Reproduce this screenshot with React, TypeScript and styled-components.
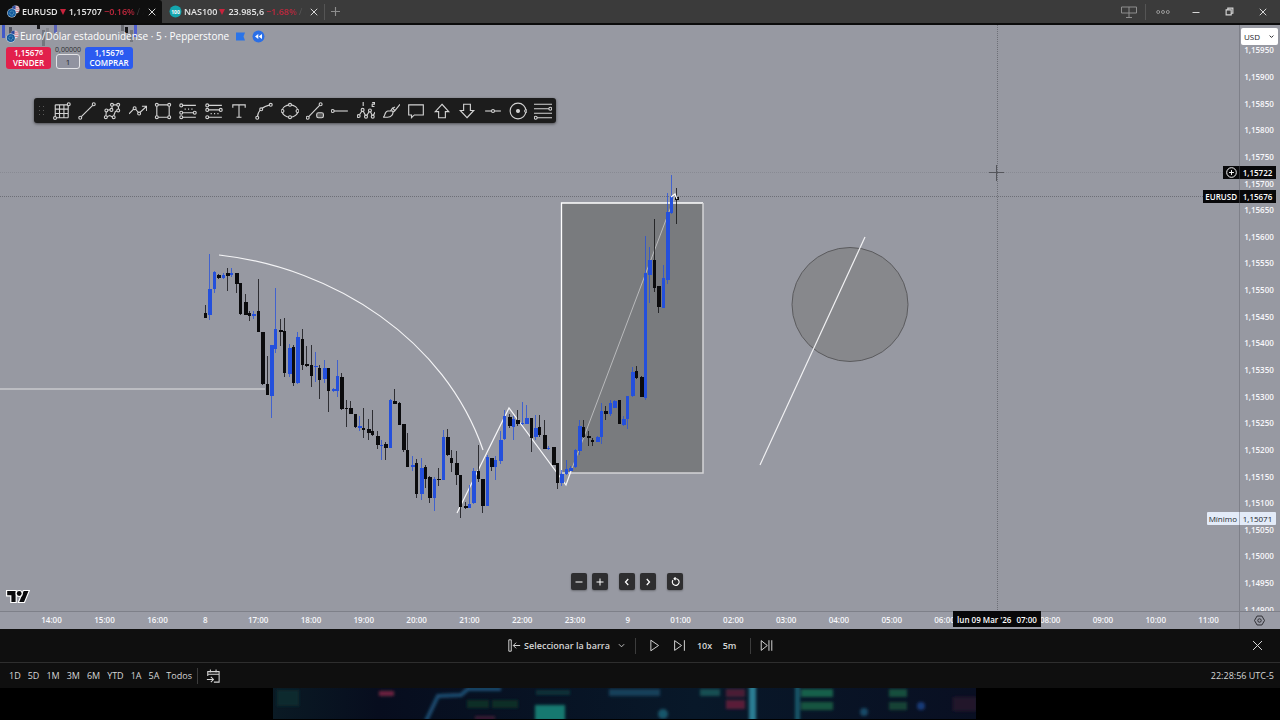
import React from 'react';
import styled, { createGlobalStyle } from 'styled-components';

const FONT = '"Open Sans", "Noto Sans", "Liberation Sans", sans-serif';
const BLUE = '#2450dc';
const BLACK = '#0b0b0d';

const GlobalStyle = createGlobalStyle`
  *, *::before, *::after { box-sizing: border-box; }
  body { margin: 0; background: #000; font-family: ${FONT}; }
  button, input, select { font-family: inherit; margin: 0; }
`;

/* ---------- page ---------- */

const Page = styled.div`
  display: flex;
  flex-direction: column;
  height: 100vh;
  min-height: 480px;
  background: #000;
  color: #fff;
  overflow: hidden;
`;

const IconButton = styled.button<{ $w?: number; $color?: string }>`
  display: flex;
  align-items: center;
  justify-content: center;
  width: ${(p) => p.$w ?? 16}px;
  height: 16px;
  padding: 0;
  border: 0;
  background: none;
  color: ${(p) => p.$color ?? '#d6d6d6'};
  flex: none;
`;

const Divider = styled.span<{ $color?: string }>`
  width: 1px;
  height: 16px;
  background: ${(p) => p.$color ?? '#3c3c3c'};
  flex: none;
`;

/* ---------- tab bar ---------- */

const TabBar = styled.header`
  display: flex;
  align-items: center;
  flex: none;
  height: 25px;
  background: #3b3b3b;
  border-bottom: 2px solid #0b0b0b;
`;

const Tab = styled.div<{ $active?: boolean }>`
  display: flex;
  align-items: center;
  width: 162px;
  height: 100%;
  padding: 0 2px 0 7px;
  background: ${(p) => (p.$active ? '#0f0f0f' : 'transparent')};
  border-radius: 0 3px 0 0;
`;

const TabText = styled.div`
  display: flex;
  align-items: center;
  flex: 1;
  min-width: 0;
  margin-left: 2px;
  overflow: hidden;
  white-space: nowrap;
  font-size: 9px;
  line-height: 12px;
  font-weight: 600;
  color: #e6e6e6;
  mask-image: linear-gradient(90deg, #000 88%, transparent 100%);
`;

const Change = styled.span`
  margin-left: 2px;
  color: #c3283e;
`;

const Faded = styled.span`
  margin-left: 2px;
  font-weight: 400;
  color: #8a8a8a;
`;

const Triangle = styled.span`
  width: 0;
  height: 0;
  margin: 0 3px 0 2px;
  border: 3px solid transparent;
  border-top: 6px solid #c8233c;
  border-bottom: 0;
`;

const WindowTools = styled.div`
  display: flex;
  align-items: center;
  margin-left: auto;
`;

/* ---------- chart ---------- */

const ChartRow = styled.main`
  position: relative;
  display: flex;
  flex: 1;
  min-height: 0;
  background: #9799a2;
`;

const Plot = styled.div`
  position: relative;
  flex: 1;
  min-width: 0;
  overflow: hidden;
`;

const PlotSvg = styled.svg`
  display: block;
  width: 100%;
  height: 100%;
`;

const Legend = styled.div`
  position: absolute;
  top: 4px;
  left: 6px;
`;

const TitleRow = styled.div`
  display: flex;
  align-items: center;
  height: 15px;
  gap: 1px;
`;

const Title = styled.h1`
  margin: 0;
  font-size: 10px;
  line-height: 15px;
  font-weight: 500;
  color: #fff;
  white-space: nowrap;
`;

const TitleBadges = styled.div`
  display: flex;
  align-items: center;
  gap: 7px;
  margin-left: 6px;
`;

const TradeRow = styled.div`
  display: flex;
  align-items: flex-end;
  gap: 5px;
  height: 24px;
  margin-top: 1px;
`;

const TradeButton = styled.button<{ $bg: string; $w: number }>`
  display: flex;
  flex-direction: column;
  align-items: center;
  justify-content: center;
  width: ${(p) => p.$w}px;
  height: 22px;
  padding: 0;
  border: 0;
  border-radius: 3px;
  background: ${(p) => p.$bg};
  color: #fff;
  font-size: 8px;
  line-height: 10px;
  font-weight: 600;
`;

const Pip = styled.sup`
  font-size: 7px;
  line-height: 7px;
  vertical-align: 1px;
`;

const Quantity = styled.label`
  display: flex;
  flex-direction: column;
  align-items: center;
  width: 24px;
  font-size: 7px;
  line-height: 8px;
  color: #2c2c30;
`;

const QuantityInput = styled.input`
  width: 24px;
  height: 15px;
  padding: 0;
  border: 1px solid #e4e4e8;
  border-radius: 3px;
  background: #9193a0;
  color: #26262a;
  font-size: 8px;
  text-align: center;
`;

const DrawToolbar = styled.div`
  position: absolute;
  top: 73px;
  left: 34px;
  display: flex;
  align-items: center;
  width: 522px;
  height: 25px;
  border-radius: 3px;
  background: #1c1c1c;
  box-shadow: 0 1px 3px rgba(0, 0, 0, 0.5);
`;

const Grip = styled.span`
  display: flex;
  justify-content: center;
  width: 15px;
`;

const ToolButton = styled.button`
  display: flex;
  align-items: center;
  justify-content: center;
  flex: 1;
  min-width: 0;
  height: 100%;
  padding: 0;
  border: 0;
  background: none;
  color: #d2d2d2;
`;

const NavButtons = styled.div`
  position: absolute;
  bottom: 21px;
  left: 571px;
  display: flex;
  gap: 11px;
`;

const NavGroup = styled.div`
  display: flex;
  gap: 5px;
`;

const NavButton = styled.button`
  display: flex;
  align-items: center;
  justify-content: center;
  width: 16px;
  height: 17px;
  padding: 0;
  border: 0;
  border-radius: 2px;
  background: #2e2e30;
  color: #fff;
  box-shadow: 0 1px 2px rgba(0, 0, 0, 0.3);
`;

const Brand = styled.a`
  position: absolute;
  left: 6px;
  bottom: 7px;
  display: flex;
`;

const PriceAxis = styled.aside`
  position: relative;
  display: flex;
  flex-direction: column;
  flex: none;
  width: 41px;
  border-left: 1px solid #7e8089;
  overflow: hidden;
`;

const PriceList = styled.ol`
  display: flex;
  flex-direction: column;
  flex: 1;
  margin: 12px 0 -12px;
  padding: 0 2px 0 0;
  list-style: none;
`;

const Price = styled.li`
  display: flex;
  align-items: center;
  justify-content: center;
  flex: 1;
  font-size: 8px;
  line-height: 10px;
  font-weight: 600;
  color: #f7f7fa;
`;

const CurrencyBox = styled.label`
  position: absolute;
  top: 3px;
  left: 1px;
  right: 2px;
  display: flex;
  align-items: center;
  height: 17px;
  padding: 0 4px 0 3px;
  border-radius: 2px;
  background: #fff;
  color: #1b1b1f;
`;

const Currency = styled.select`
  flex: 1;
  min-width: 0;
  padding: 0;
  border: 0;
  background: none;
  color: inherit;
  font-size: 8px;
  line-height: 12px;
  appearance: none;
`;

const AxisTag = styled.div<{ $top: number; $light?: boolean }>`
  position: absolute;
  top: ${(p) => p.$top}px;
  right: 4px;
  display: flex;
  align-items: center;
  height: 13px;
  border-radius: ${(p) => (p.$light ? 1 : 0)}px;
  background: ${(p) => (p.$light ? '#e3ebf8' : '#08080a')};
  color: ${(p) => (p.$light ? '#22252e' : '#fff')};
  font-size: 8px;
  line-height: 13px;
  font-weight: ${(p) => (p.$light ? 500 : 600)};
  white-space: nowrap;
`;

const TagName = styled.span`
  padding: 0 2px;
`;

const TagValue = styled.span<{ $light?: boolean }>`
  width: 37px;
  padding-right: 1px;
  text-align: center;
  border-left: 1px solid ${(p) => (p.$light ? '#a9aebb' : '#2c2c30')};
`;

/* ---------- time axis ---------- */

const TimeRow = styled.div`
  position: relative;
  display: flex;
  flex: none;
  height: 18px;
  border-top: 1px solid #7e8089;
  background: #9a9ca6;
  font-size: 8px;
  line-height: 16px;
  font-weight: 600;
  color: #f7f7fa;
`;

const TimeTrack = styled.div`
  display: flex;
  flex: 1;
  min-width: 0;
  padding: 0 4px 0 25px;
`;

const PreviousDay = styled.div`
  display: flex;
  width: 159px;
  margin-right: -5px;
`;

const CurrentDays = styled.div`
  display: flex;
  flex: 1;
`;

const TimeCell = styled.span`
  flex: 1;
  min-width: 0;
  text-align: center;
`;

const AxisCorner = styled.div`
  display: flex;
  align-items: center;
  justify-content: center;
  width: 41px;
  padding-right: 2px;
  border-left: 1px solid #7e8089;
`;

const TimeTag = styled.div`
  position: absolute;
  top: -1px;
  left: 953px;
  display: flex;
  justify-content: center;
  gap: 5px;
  width: 88px;
  height: 16px;
  background: #08080a;
  color: #fff;
  font-size: 8px;
  line-height: 18px;
  white-space: nowrap;
`;

/* ---------- bottom bars ---------- */

const ReplayBar = styled.section`
  display: grid;
  grid-template-columns: 1fr auto 1fr;
  align-items: center;
  flex: none;
  height: 34px;
  padding: 0 15px;
  background: #0f0f0f;
  border-bottom: 1px solid #2e2e2e;
  color: #d6d6d6;
`;

const ReplayTools = styled.div`
  grid-column: 2;
  display: flex;
  align-items: center;
  padding-left: 2px;
`;

const ReplayClose = styled.div`
  display: flex;
  justify-content: flex-end;
`;

const TextButton = styled.button<{ $w?: number }>`
  width: ${(p) => (p.$w ? `${p.$w}px` : 'auto')};
  height: 16px;
  padding: 0;
  border: 0;
  background: none;
  color: #d6d6d6;
  font-size: 9px;
  line-height: 16px;
  font-weight: 600;
  white-space: nowrap;
`;

const RangeBar = styled.footer`
  display: flex;
  align-items: center;
  flex: none;
  height: 25px;
  padding: 0 6px 0 9px;
  background: #0f0f0f;
`;

const Ranges = styled.nav`
  display: flex;
  gap: 7px;
  margin-right: 5px;
`;

const Range = styled.button`
  height: 16px;
  padding: 0;
  border: 0;
  background: none;
  color: #d6d6d6;
  font-size: 9px;
  line-height: 16px;
  font-weight: 500;
`;

const Clock = styled.button`
  height: 16px;
  margin-left: auto;
  padding: 0;
  border: 0;
  background: none;
  color: #d6d6d6;
  font-size: 9px;
  line-height: 16px;
  font-weight: 500;
`;

const Backdrop = styled.div`
  display: flex;
  justify-content: center;
  flex: none;
  height: 32px;
  padding-right: 31px;
  background: #000;
`;

const BackdropSvg = styled.svg`
  width: 703px;
  max-width: 100%;
  height: 31px;
`;

/* ---------- data ---------- */

type Candle = [up: 0 | 1, high: number, top: number, bottom: number, low: number];

const candles: Candle[] = [
  [0, 305, 313, 318, 318], [1, 254, 289, 315, 320], [1, 271, 272, 289, 293], [0, 274, 275, 278, 279],
  [1, 273, 275, 278, 279], [0, 268, 273, 276, 291], [1, 268, 273, 275, 277], [0, 273, 273, 284, 293],
  [0, 283, 283, 314, 315], [0, 294, 302, 315, 315], [0, 311, 313, 316, 321], [1, 311, 314, 316, 319],
  [0, 279, 311, 332, 332], [0, 332, 332, 384, 385], [0, 356, 384, 395, 395], [1, 345, 345, 396, 418],
  [1, 288, 329, 349, 353], [0, 319, 330, 332, 346], [0, 318, 331, 373, 377], [1, 344, 348, 374, 377],
  [0, 345, 347, 383, 386], [1, 332, 337, 383, 384], [0, 329, 339, 365, 370], [0, 346, 364, 366, 367],
  [0, 345, 365, 376, 387], [1, 352, 366, 367, 382], [0, 365, 368, 380, 399], [1, 360, 368, 379, 383],
  [0, 368, 368, 391, 412], [1, 388, 389, 391, 392], [1, 360, 376, 391, 397], [0, 373, 377, 409, 410],
  [0, 400, 408, 409, 427], [0, 401, 408, 414, 414], [0, 414, 414, 427, 428], [1, 416, 426, 428, 431],
  [0, 408, 428, 430, 438], [0, 419, 429, 433, 440], [0, 410, 431, 435, 436],
  [0, 431, 436, 445, 449], [1, 440, 445, 446, 460], [0, 442, 444, 448, 460], [1, 399, 400, 448, 448],
  [0, 389, 401, 404, 404], [0, 402, 403, 425, 425], [0, 424, 424, 450, 452], [0, 433, 450, 467, 467],
  [1, 456, 465, 467, 471], [0, 459, 463, 494, 498], [1, 458, 468, 494, 500], [0, 465, 467, 479, 488],
  [0, 476, 477, 498, 503], [1, 477, 479, 498, 511], [0, 468, 479, 480, 486], [1, 430, 437, 480, 480],
  [0, 429, 437, 455, 456], [0, 450, 458, 463, 472], [0, 451, 463, 475, 485], [0, 475, 475, 507, 518],
  [0, 502, 506, 508, 509], [1, 485, 504, 508, 508], [1, 468, 471, 503, 504], [0, 445, 471, 479, 482],
  [0, 479, 479, 506, 513], [1, 455, 457, 506, 506], [0, 458, 458, 467, 471], [1, 456, 460, 467, 480],
  [1, 431, 440, 461, 464], [1, 410, 416, 439, 440], [0, 414, 417, 426, 428], [1, 416, 419, 427, 440],
  [0, 410, 420, 424, 426], [1, 402, 423, 424, 425], [1, 405, 418, 424, 424], [0, 418, 418, 438, 452],
  [1, 415, 428, 437, 440], [0, 415, 427, 435, 437], [0, 420, 435, 449, 449], [1, 446, 448, 449, 450],
  [0, 447, 447, 465, 465], [0, 463, 463, 483, 489], [1, 470, 474, 483, 486], [1, 460, 469, 474, 475],
  [1, 466, 468, 471, 471], [1, 449, 450, 467, 468], [1, 420, 426, 451, 455], [0, 420, 427, 437, 438],
  [0, 431, 436, 438, 446], [0, 438, 440, 442, 446], [1, 436, 437, 442, 442], [1, 403, 411, 437, 444],
  [0, 406, 411, 414, 420], [1, 400, 403, 414, 416], [1, 400, 401, 408, 408], [0, 400, 400, 424, 424],
  [1, 416, 419, 425, 426], [1, 396, 396, 419, 429], [1, 367, 372, 396, 397], [0, 366, 371, 378, 379],
  [0, 376, 377, 397, 397], [1, 236, 273, 398, 400], [1, 247, 260, 275, 303], [0, 219, 260, 288, 292],
  [0, 286, 286, 307, 313], [1, 265, 278, 308, 308], [1, 193, 212, 280, 284], [1, 175, 196, 213, 214],
  [0, 188, 197, 200, 224],
];

const prices = Array.from({ length: 22 }, (_, i) => `1,${15950 - i * 50}`);
const previousTimes = ['14:00', '15:00', '16:00'];
/* The hour under the crosshair has no label of its own; the time tag shows it. */
const times = [
  '8', '17:00', '18:00', '19:00', '20:00', '21:00', '22:00', '23:00', '9', '01:00',
  '02:00', '03:00', '04:00', '05:00', '06:00', '', '08:00', '09:00', '10:00', '11:00',
];
const ranges = ['1D', '5D', '1M', '3M', '6M', 'YTD', '1A', '5A', 'Todos'];

/* ---------- icons ---------- */

const Glyph = ({ size = 16, children, sw = 1 }: { size?: number; sw?: number; children: React.ReactNode }) => (
  <svg width={size} height={size} viewBox="0 0 16 16" fill="none" stroke="currentColor" strokeWidth={sw} aria-hidden="true">
    {children}
  </svg>
);

const Dot = ({ x, y, r = 1.3 }: { x: number; y: number; r?: number }) => <circle cx={x} cy={y} r={r} fill="#1c1c1c" />;

const CloseIcon = ({ size = 8 }: { size?: number }) => (
  <Glyph size={size} sw={16 / size}><path d="M1.5 1.5l13 13M14.5 1.5l-13 13" /></Glyph>
);

const PairIcon = () => (
  <svg width="13" height="13" viewBox="0 0 13 13" aria-hidden="true">
    <circle cx="8.6" cy="4.4" r="3.9" fill="#e8e3ea" />
    <path d="M8.6 .5a3.9 3.9 0 0 0-3.9 3.9h3.9z" fill="#2c4a9c" />
    <path d="M8.6 2.2h3.2M8.6 4.2h3.9M6 6.4h6" stroke="#c65a68" strokeWidth=".8" />
    <circle cx="4.8" cy="8" r="4.6" fill="#dfe7f0" />
    <circle cx="4.8" cy="8" r="4.1" fill="#155a9d" />
    <circle cx="4.8" cy="8" r="2" fill="none" stroke="#6fb0c8" strokeWidth=".9" strokeDasharray="1 .6" />
  </svg>
);

const IndexIcon = () => (
  <svg width="13" height="13" viewBox="0 0 13 13" aria-hidden="true">
    <circle cx="6.5" cy="6.5" r="6" fill="#14a5ad" />
    <text x="6.5" y="8.5" fontSize="5" fontWeight="700" fill="#fff" textAnchor="middle">100</text>
  </svg>
);

const tools: { name: string; icon: React.ReactNode }[] = [
  { name: 'Cuadrícula', icon: <><path d="M2 2.5h11.5v11.5M2 2.5v11.5h11.5M2 6.3h11.5M2 10.2h11.5M5.8 2.5v11.5M9.7 2.5v11.5" /><Dot x={14} y={2} /><Dot x={1.8} y={14.2} /></> },
  { name: 'Línea de tendencia', icon: <><path d="M2.5 13.5l11-11" /><Dot x={2} y={14} /><Dot x={14} y={2} /></> },
  { name: 'Trazado', icon: <><path d="M2.5 13.5L3 7.5l5-1 0-4 5.5 0 .5 5-3 1-2 5-3-1.500z" /><Dot x={2.5} y={13.5} /><Dot x={3} y={7.5} /><Dot x={8} y={2.5} /><Dot x={13.500} y={2.500} /><Dot x={13.500} y={7.5} /><Dot x={7.500} y={7} /><Dot x={9.500} y={13.500} /></> },
  { name: 'Polilínea', icon: <><path d="M0 10.500L5 5.500l4 4.500 6.500-6M11.500 3.800h4.200V8" /><Dot x={5} y={5.500} /><Dot x={9} y={10.300} /></> },
  { name: 'Rectángulo', icon: <><path d="M2.500 2.500h11v11h-11z" /><Dot x={2.500} y={2.500} /><Dot x={13.500} y={2.500} /><Dot x={2.500} y={13.500} /><Dot x={13.500} y={13.500} /></> },
  { name: 'Posición larga', icon: <><path d="M1 3h14M1 9.500h14M1 13.500h14" /><path d="M5 6.300h8" strokeDasharray="1 2" /><Dot x={2} y={3} /><Dot x={14} y={9.500} /><Dot x={2} y={9.500} /><Dot x={2} y={13.500} /></> },
  { name: 'Posición corta', icon: <><path d="M1 3h14M1 7h14M1 13.500h14" /><path d="M5 10.300h8" strokeDasharray="1 2" /><Dot x={2} y={3} /><Dot x={2} y={7} /><Dot x={14} y={7} /><Dot x={2} y={13.500} /></> },
  { name: 'Texto', icon: <path d="M2.500 5V2.500h11V5M8 2.500v11M5.800 13.500h4.400" /> },
  { name: 'Curva', icon: <><path d="M2 14C2.500 8 6 4 14 2.500" /><Dot x={2} y={14} /><Dot x={5.500} y={6.500} /><Dot x={14} y={2.500} /></> },
  { name: 'Elipse', icon: <><ellipse cx="8" cy="8" rx="7" ry="5.500" /><Dot x={1.300} y={8} /><Dot x={14.700} y={8} /><Dot x={8} y={2.500} /><Dot x={8} y={13.500} /></> },
  { name: 'Línea con información', icon: <><path d="M2 13.500l10.500-11" /><Dot x={1.500} y={14} /><Dot x={13} y={2} /><rect x="9.500" y="9.500" width="6" height="4.500" rx="1.500" fill="#555" /></> },
  { name: 'Rayo horizontal', icon: <><path d="M2 8h13" /><Dot x={1.500} y={8} /></> },
  { name: 'Ondas de Elliott', icon: <><path d="M1.500 12.500L5 7l3 6 3.500-5.500L14 13l2-4" /><path d="M5.500 0v3.500M13.500 .500h2v1.500h-2v2h2" /><Dot x={1.500} y={12.500} /><Dot x={5} y={7} /><Dot x={8} y={13} /><Dot x={11.500} y={7.500} /><Dot x={14} y={13} /></> },
  { name: 'Pincel', icon: <><path d="M1 13.500c2-.500 1-5 4-5.500h4.500c1 3-1.500 5.500-4.500 5.500zM7.500 8l1.800-2.500 2.200 2.200L16 2M9.500 9.500l2-1.800M9.500 5.500l2-1" /></> },
  { name: 'Comentario', icon: <path d="M1.500 2.500h13v9H6.500L4 14v-2.500H1.500z" /> },
  { name: 'Flecha arriba', icon: <path d="M8 2l6 6.500h-3V14H5V8.500H2z" /> },
  { name: 'Flecha abajo', icon: <path d="M8 14l6-6.500h-3V2H5v5.500H2z" /> },
  { name: 'Línea horizontal', icon: <><path d="M1 8h14" /><Dot x={8} y={8} /></> },
  { name: 'Círculo', icon: <><circle cx="8" cy="8" r="7" /><circle cx="8" cy="8" r="1.300" fill="currentColor" /><Dot x={15} y={8} r={1.100} /></> },
  { name: 'Retroceso de Fibonacci', icon: <><path d="M0 2h16M0 6h16M0 10h16M0 14h16" /><Dot x={14.500} y={6} /><Dot x={1.500} y={14} /></> },
];

/* ---------- chart drawing ---------- */

const GHOSTS: [number, number, number, string][] = [
  [3, 25, 38, '#4159c9'], [10, 27, 36, '#4f5362'], [38, 25, 29, '#17171b'], [43, 30, 46, '#74767e'],
  [47, 28, 38, '#85878f'], [55, 25, 33, '#5a63b8'], [122, 25, 31, '#6a6c74'], [126, 27, 33, '#17171b'],
  [131, 30, 42, '#74767e'], [135, 25, 37, '#4f5fd0'],
];

const ChartDrawing = () => (
  <PlotSvg role="img" aria-label="Gráfico de velas EURUSD 5 minutos">
    <g transform="translate(0 -25)">
      {GHOSTS.map(([x, y1, y2, c]) => <rect key={x} x={x - 1} y={y1} width="3" height={y2 - y1} fill={c} />)}
      <line x1="0" x2="100%" y1="172.500" y2="172.500" stroke="#888a93" strokeDasharray="1 1" />
      <line x1="0" x2="100%" y1="196.500" y2="196.500" stroke="#6d6f77" strokeDasharray="1 1" />
      <line x1="997.500" x2="997.500" y1="25" y2="2000" stroke="#6d6f77" strokeDasharray="1 1" />
      <line x1="0" x2="265" y1="389" y2="389" stroke="#c9cacd" strokeWidth="1.500" />
      <path d="M219 255C335 268 445 340 483 450" fill="none" stroke="#f4f4f6" strokeWidth="1.200" />
      <ellipse cx="850" cy="304.500" rx="58" ry="57" fill="#87888c" stroke="#5b5b5e" />
      <path d="M865 237L760 465" stroke="#f2f2f4" strokeWidth="1.200" />
      <rect x="561.500" y="203" width="141.500" height="270" fill="#797b7e" />
      <path d="M561.500 473V203H703" fill="none" stroke="#fff" strokeWidth="1.300" />
      <path d="M561.500 473H703V203" fill="none" stroke="#d4d4d6" strokeWidth="1.500" />
      <path d="M457 513L509 408L566 485L571 471" fill="none" stroke="#f7f7f9" strokeWidth="1.200" />
      <path d="M571 471L675 196" fill="none" stroke="#b9babc" />
      <g shapeRendering="crispEdges">
        {candles.map(([up, high, top, bottom, low], i) => {
          const x = Math.round(204.900 + i * 4.400);
          const fill = up ? BLUE : BLACK;
          return (
            <g key={i} fill={fill}>
              <rect x={x} y={high} width="1" height={Math.max(1, low - high)} opacity=".75" />
              <rect x={x - 1} y={top} width={i % 2 ? 4 : 3} height={Math.max(1, bottom - top)} />
            </g>
          );
        })}
      </g>
      <path d="M671 197l4-3 2 5" fill="none" stroke="#fff" strokeWidth="1.200" />
      <path d="M989 172.500h15M996.500 165v16" stroke="#55565c" />
    </g>
  </PlotSvg>
);

const TradeSide = ({ bg, w, label }: { bg: string; w: number; label: string }) => (
  <TradeButton $bg={bg} $w={w}>
    <span>1,1567<Pip>6</Pip></span>
    <span>{label}</span>
  </TradeButton>
);

const Instrument = ({ active, icon, symbol, last, change }: { active?: boolean; icon: React.ReactNode; symbol: string; last: string; change: string }) => (
  <Tab $active={active}>
    {icon}
    <TabText>
      {symbol}
      <Triangle />
      {last}
      <Change>{change}</Change>
      <Faded>/ /</Faded>
    </TabText>
    <IconButton aria-label={`Cerrar ${symbol}`}><CloseIcon /></IconButton>
  </Tab>
);

export default function App() {
  return (
    <Page>
      <GlobalStyle />
      <TabBar>
        <Instrument active icon={<PairIcon />} symbol="EURUSD" last="1,15707" change="−0.16%" />
        <Instrument icon={<IndexIcon />} symbol="NAS100" last="23.985,6" change="−1.68%" />
        <Divider $color="#555" />
        <IconButton $w={20} $color="#8e8e8e" aria-label="Nueva pestaña"><Glyph size={9} sw={2}><path d="M8 0v16M0 8h16" /></Glyph></IconButton>
        <WindowTools>
          <IconButton $w={33} $color="#8e8e8e" aria-label="Diseño"><Glyph><path d="M.5 3h15v6H.5zM8 3v11M5 13.500h6" /></Glyph></IconButton>
          <Divider $color="#555" />
          <IconButton $w={33} $color="#9a9a9a" aria-label="Más"><Glyph size={14} sw={1.100}><circle cx="2.500" cy="8" r="1.700" /><circle cx="8" cy="8" r="1.700" /><circle cx="13.500" cy="8" r="1.700" /></Glyph></IconButton>
          <IconButton $w={34} aria-label="Minimizar"><Glyph size={8} sw={2}><path d="M1 9h14" /></Glyph></IconButton>
          <IconButton $w={33} aria-label="Restaurar"><Glyph size={9} sw={2}><path d="M2 5h9v9H2zM5 5V2h9v9h-3" /></Glyph></IconButton>
          <IconButton $w={34} aria-label="Cerrar"><CloseIcon /></IconButton>
        </WindowTools>
      </TabBar>

      <ChartRow>
        <Plot>
          <ChartDrawing />
          <Legend>
            <TitleRow>
              <PairIcon />
              <Title>Euro/Dólar estadounidense · 5 · Pepperstone</Title>
              <TitleBadges>
                <svg width="9" height="9" viewBox="0 0 9 9" aria-hidden="true"><path d="M0 .500h9L7.500 4.500 9 8.500H0z" fill="#2b74e8" /></svg>
                <svg width="13" height="13" viewBox="0 0 13 13" aria-hidden="true"><circle cx="6.500" cy="6.500" r="6" fill="#2b6fe6" /><path d="M6.300 4v5L3 6.500zM10 4v5L6.700 6.500z" fill="#fff" /></svg>
              </TitleBadges>
            </TitleRow>
            <TradeRow>
              <TradeSide bg="#e2204c" w={45} label="VENDER" />
              <Quantity>
                0,00000
                <QuantityInput aria-label="Cantidad" defaultValue="1" />
              </Quantity>
              <TradeSide bg="#2b5bf0" w={48} label="COMPRAR" />
            </TradeRow>
          </Legend>

          <DrawToolbar role="toolbar" aria-label="Herramientas de dibujo">
            <Grip>
              <svg width="6" height="9" viewBox="0 0 6 9" fill="#5a5a5a" aria-hidden="true">
                {[0, 4, 8].map((y) => <path key={y} d={`M0 ${y}h1v1H0zM4 ${y}h1v1H4z`} />)}
              </svg>
            </Grip>
            {tools.map((t) => <ToolButton key={t.name} aria-label={t.name}><Glyph size={18}>{t.icon}</Glyph></ToolButton>)}
          </DrawToolbar>

          <Brand href="#" aria-label="TradingView">
            <svg width="24" height="15" viewBox="-2 1 40 24" fill="#0b0b0d" stroke="#fff" strokeWidth="4" paintOrder="stroke" aria-hidden="true">
              <path d="M14 22H7V11H0V4h14v18zM28 22h-8l7.500-18h8L28 22z" /><circle cx="20" cy="8" r="4" />
            </svg>
          </Brand>

          <NavButtons>
            <NavGroup>
              <NavButton aria-label="Alejar"><Glyph size={8} sw={2}><path d="M1 8h14" /></Glyph></NavButton>
              <NavButton aria-label="Acercar"><Glyph size={8} sw={2}><path d="M1 8h14M8 1v14" /></Glyph></NavButton>
            </NavGroup>
            <NavGroup>
              <NavButton aria-label="Atrás"><Glyph size={8} sw={2.500}><path d="M10.500 2L5 8l5.500 6" /></Glyph></NavButton>
              <NavButton aria-label="Adelante"><Glyph size={8} sw={2.500}><path d="M5.500 2L11 8l-5.500 6" /></Glyph></NavButton>
            </NavGroup>
            <NavButton aria-label="Restablecer"><Glyph size={9} sw={2}><path d="M3.500 5.500a6 6 0 1 0 5.500-2.500H5M8 .500L5.500 3 8 5.500" /></Glyph></NavButton>
          </NavButtons>
        </Plot>

        <PriceAxis>
          <PriceList>
            {prices.map((p) => <Price key={p}>{p}</Price>)}
          </PriceList>
          <CurrencyBox>
            <Currency aria-label="Moneda"><option>USD</option></Currency>
            <Glyph size={5} sw={3}><path d="M2 5l6 6 6-6" /></Glyph>
          </CurrencyBox>
        </PriceAxis>

        <AxisTag $top={141}>
          <IconButton $color="#fff" aria-label="Añadir alerta"><Glyph size={11} sw={1.400}><circle cx="8" cy="8" r="7" /><path d="M8 4.500v7M4.500 8h7" /></Glyph></IconButton>
          <TagValue>1,15722</TagValue>
        </AxisTag>
        <AxisTag $top={165}><TagName>EURUSD</TagName><TagValue>1,15676</TagValue></AxisTag>
        <AxisTag $top={487} $light><TagName>Mínimo</TagName><TagValue $light>1,15071</TagValue></AxisTag>
      </ChartRow>

      <TimeRow>
        <TimeTrack>
          <PreviousDay>{previousTimes.map((t) => <TimeCell key={t}>{t}</TimeCell>)}</PreviousDay>
          <CurrentDays>{times.map((t) => <TimeCell key={t}>{t}</TimeCell>)}</CurrentDays>
        </TimeTrack>
        <AxisCorner>
          <IconButton $color="#2b2b30" aria-label="Ajustes"><Glyph size={11} sw={1.400}><path d="M4.500 1.500h7L15.300 8l-3.800 6.500h-7L.7 8z" /><circle cx="8" cy="8" r="2.500" /></Glyph></IconButton>
        </AxisCorner>
        <TimeTag><span>lun 09 Mar '26</span><span>07:00</span></TimeTag>
      </TimeRow>

      <ReplayBar>
        <ReplayTools>
          <IconButton $w={13} aria-label="Ir a la barra"><Glyph size={13} sw={1.200}><path d="M1 1h3v14H1zM15 8H6.500M10 4.500L6.500 8l3.500 3.500" /></Glyph></IconButton>
          <TextButton $w={92}>Seleccionar la barra</TextButton>
          <IconButton aria-label="Opciones"><Glyph size={7} sw={2}><path d="M2 5l6 6 6-6" /></Glyph></IconButton>
          <IconButton $w={13} as="span"><Divider /></IconButton>
          <IconButton $w={25} aria-label="Reproducir"><Glyph size={13} sw={1.200}><path d="M3.500 1.500L13 8l-9.500 6.500z" /></Glyph></IconButton>
          <IconButton $w={25} aria-label="Avanzar"><Glyph size={13} sw={1.200}><path d="M2 2l8.500 6L2 14zM14 1.500v13" /></Glyph></IconButton>
          <TextButton $w={25}>10x</TextButton>
          <TextButton $w={25}>5m</TextButton>
          <IconButton $w={17} as="span"><Divider /></IconButton>
          <IconButton $w={15} aria-label="Ir a tiempo real"><Glyph size={13} sw={1.200}><path d="M1.500 2L9 8l-7.500 6zM11 1.500v13M14.500 1.500v13" /></Glyph></IconButton>
        </ReplayTools>
        <ReplayClose>
          <IconButton aria-label="Cerrar reproducción"><CloseIcon size={11} /></IconButton>
        </ReplayClose>
      </ReplayBar>

      <RangeBar>
        <Ranges aria-label="Rango">{ranges.map((r) => <Range key={r}>{r}</Range>)}</Ranges>
        <Divider />
        <IconButton $w={30} aria-label="Ir a fecha"><Glyph size={14} sw={1.200}><path d="M2 8V3h13v12H9M2 6h13M5 .500V4M11.500 .500V4M1 12h7M5.500 9L8.500 12l-3 3" /></Glyph></IconButton>
        <Clock>22:28:56 UTC-5</Clock>
      </RangeBar>

      <Backdrop>
        <BackdropSvg viewBox="0 0 703 31" preserveAspectRatio="none" aria-hidden="true">
          <defs>
            <linearGradient id="night" x1="0" x2="1" y1="0" y2="0">
              <stop offset="0" stopColor="#0a1a24" /><stop offset=".15" stopColor="#070d1e" />
              <stop offset=".6" stopColor="#081829" /><stop offset="1" stopColor="#090f22" />
            </linearGradient>
            <filter id="soft" x="-20%" y="-50%" width="140%" height="200%"><feGaussianBlur stdDeviation="1.500" /></filter>
          </defs>
          <rect width="703" height="31" fill="url(#night)" />
          <g filter="url(#soft)">
            <rect x="4" y="2" width="22" height="16" fill="#0d2a2e" />
            <rect x="106" y="3" width="15" height="5" fill="#6d2440" />
            <path d="M153 33L165 8L188 7L195 1H228" fill="none" stroke="#1b4c70" strokeWidth="4" />
            <rect x="194" y="12" width="22" height="8" fill="#0c2e26" /><rect x="219" y="12" width="26" height="8" fill="#0c2e26" />
            <rect x="202" y="28" width="20" height="4" fill="#3a1c30" />
            <rect x="263" y="2" width="34" height="5" fill="#0f3038" />
            <rect x="262" y="17" width="30" height="16" fill="#16796f" />
            <rect x="336" y="1" width="51" height="7" fill="#15405a" />
            <rect x="427" y="1" width="20" height="7" fill="#165052" />
            <rect x="453" y="1" width="19" height="8" fill="#4c1a35" /><rect x="453" y="12" width="19" height="9" fill="#5a1c38" />
            <rect x="476" y="-3" width="7" height="38" fill="#2a7d93" />
            <rect x="522" y="-3" width="5" height="38" fill="#195568" />
            <rect x="528" y="1" width="32" height="8" fill="#17604c" /><rect x="528" y="14" width="32" height="8" fill="#155541" />
            <rect x="616" y="1" width="18" height="8" fill="#14503d" /><rect x="616" y="14" width="18" height="8" fill="#124334" />
            <circle cx="390" cy="26" r="5" fill="#19566a" /><circle cx="591" cy="24" r="4" fill="#154a66" />
            <circle cx="648" cy="18" r="4" fill="#193a78" />
            <rect x="680" y="9" width="24" height="14" fill="#221329" />
          </g>
        </BackdropSvg>
      </Backdrop>
    </Page>
  );
}
